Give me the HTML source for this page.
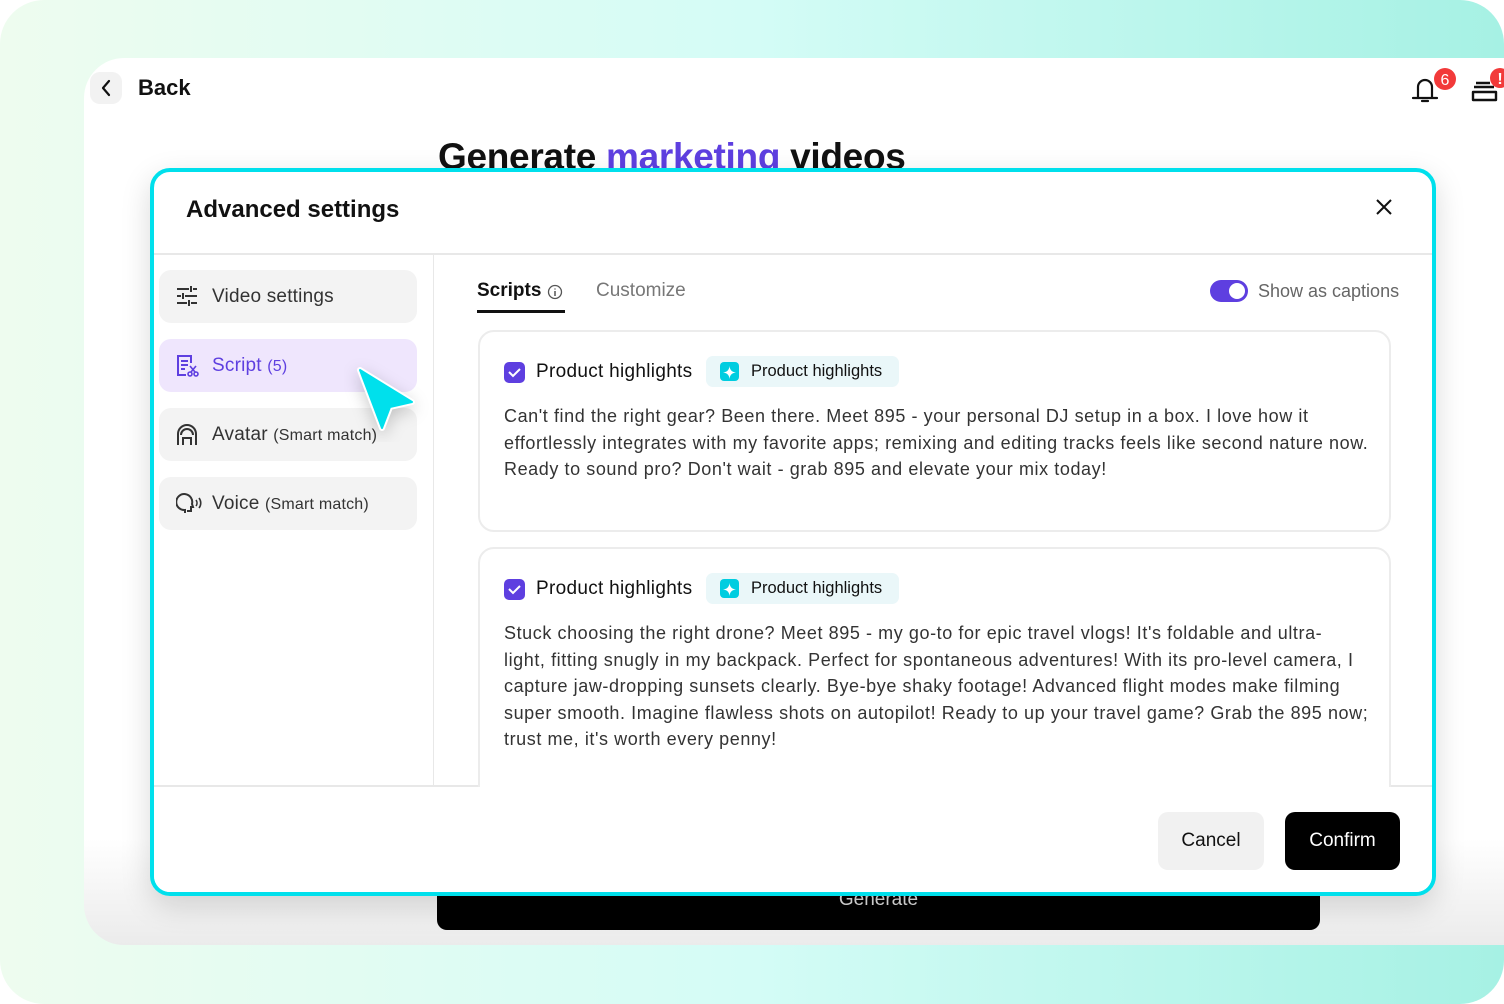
<!DOCTYPE html>
<html><head><meta charset="utf-8">
<style>
*{box-sizing:border-box;margin:0;padding:0}
body{width:1504px;height:1004px;overflow:hidden;font-family:"Liberation Sans",sans-serif;background:#fff;position:relative}
.bg{position:absolute;left:0;top:0;width:1504px;height:1004px;border-radius:44px;background:linear-gradient(90deg,#eefcef 0%,#d4fcf6 50%,#a6f1e4 100%)}
.panel{position:absolute;left:84px;top:58px;width:1420px;height:887px;border-radius:40px 0 0 40px;background:linear-gradient(180deg,#fff 0%,#fff 88%,#ebebeb 100%)}
.back{position:absolute;left:90px;top:72px;width:32px;height:32px;border-radius:10px;background:#f2f2f2}
.backt{position:absolute;left:138px;top:75px;font-size:22px;font-weight:bold;color:#111}
.title{position:absolute;left:438px;top:136px;font-size:37px;font-weight:bold;color:#111;letter-spacing:-0.3px;white-space:nowrap}
.title span{color:#5e3fe0}
.gen{position:absolute;left:437px;top:880px;width:883px;height:50px;border-radius:0 0 10px 10px;background:#000;color:#ddd;font-size:19px;text-align:center;line-height:40px}
.modal{position:absolute;left:150px;top:168px;width:1286px;height:728px;border:4px solid #00e0ec;border-radius:20px;background:#fff;box-shadow:0 10px 30px rgba(0,0,0,.15);overflow:hidden}
.mh{position:absolute;left:32px;top:24px;font-size:24px;font-weight:bold;color:#111}
.hd{position:absolute;left:0;top:81px;width:100%;height:2px;background:#e8e8e8}
.sd{position:absolute;left:279px;top:83px;width:1px;height:530px;background:#e8e8e8}
.fd{position:absolute;left:0;top:613px;width:100%;height:2px;background:#e8e8e8}
.item{position:absolute;left:5px;width:258px;height:53px;border-radius:12px;background:#f3f3f3;font-size:19px;color:#333;line-height:53px;padding-left:53px;letter-spacing:0.2px}
.item small{font-size:16px}
.item svg{position:absolute;left:17px;top:15px}
.item.act{background:#efe6fd;color:#5e3fe0}
.tab{position:absolute;top:108px;font-size:19px}
.card{position:absolute;left:324px;width:913px;border:2px solid #ececec;border-radius:16px;background:#fff}
.cb{position:absolute;left:24px;width:21px;height:21px;border-radius:5px;background:#5e3fe0}
.cb svg{position:absolute;left:4px;top:5px}
.ch{position:absolute;left:56px;font-size:19px;color:#111;letter-spacing:0.3px}
.tag{position:absolute;left:226px;width:193px;height:31px;border-radius:7px;background:#eaf7f9;font-size:16.5px;color:#111;line-height:31px;padding-left:45px}
.tag i{position:absolute;left:14px;top:6px;width:19px;height:19px;border-radius:4px;background:#00cde0}
.tx{position:absolute;left:24px;font-size:18px;line-height:26.6px;color:#333;letter-spacing:0.58px;white-space:nowrap}
.btn{position:absolute;top:640px;height:58px;border-radius:10px;font-size:19px;line-height:58px;text-align:center}
</style></head><body>
<div class="bg"></div>
<div class="panel"></div>
<div class="back"><svg width="32" height="32"><path d="M19 9l-6 7 6 7" fill="none" stroke="#111" stroke-width="2.2" stroke-linecap="round" stroke-linejoin="round"/></svg></div>
<div class="backt">Back</div>
<svg style="position:absolute;left:1408px;top:66px" width="52" height="38">
<path d="M5 32h24M10 31V21a7 7 0 0 1 14 0v10M14 35h6" fill="none" stroke="#111" stroke-width="2.2" stroke-linecap="round"/>
<circle cx="37" cy="13" r="11" fill="#f23a3a"/><text x="37" y="19" font-size="16" fill="#fff" text-anchor="middle" font-family="Liberation Sans">6</text></svg>
<svg style="position:absolute;left:1468px;top:66px" width="36" height="38">
<path d="M6 21h20M5 26h23v8H5zM8 17h14" fill="none" stroke="#111" stroke-width="2.4" stroke-linejoin="round"/>
<circle cx="32" cy="12" r="10" fill="#f23a3a"/><text x="32" y="18" font-size="16" font-weight="bold" fill="#fff" text-anchor="middle" font-family="Liberation Sans">!</text></svg>
<div class="title">Generate <span>marketing</span> videos</div>
<div class="gen">Generate</div>
<div class="modal">
<div class="mh">Advanced settings</div>
<svg style="position:absolute;left:1220px;top:25px" width="20" height="20"><path d="M3 3l14 14M17 3L3 17" stroke="#111" stroke-width="2"/></svg>
<div class="hd"></div><div class="sd"></div><div class="fd"></div>
<div class="item" style="top:98px"><svg width="22" height="22"><path d="M1 4h12M17 4h4M15 1v6M1 11h4M9 11h12M7 8v6M1 18h10M15 18h6M13 15v6" stroke="#333" stroke-width="2" fill="none"/></svg>Video settings</div>
<div class="item act" style="top:167px"><svg width="24" height="24"><path d="M15 9V2H2v19h8M5 7h7M5 11h7M5 15h4" stroke="#5e3fe0" stroke-width="2" fill="none"/><circle cx="14" cy="20" r="2" stroke="#5e3fe0" stroke-width="1.6" fill="none"/><circle cx="20" cy="20" r="2" stroke="#5e3fe0" stroke-width="1.6" fill="none"/><path d="M14 12l5 6M20 12l-5 6" stroke="#5e3fe0" stroke-width="1.6"/></svg>Script <small>(5)</small></div>
<div class="item" style="top:236px"><svg width="24" height="24"><path d="M2 22V11a9 9 0 0 1 18 0v11M7 22v-7h8v7" stroke="#333" stroke-width="2" fill="none"/><path d="M5 12a6 6 0 0 1 12 0" stroke="#333" stroke-width="2" fill="none"/></svg>Avatar <small>(Smart match)</small></div>
<div class="item" style="top:305px"><svg width="26" height="24"><path d="M9 21v-3a8 8 0 1 1 7-6l1 3h-2v4h-4" stroke="#333" stroke-width="2" fill="none"/><path d="M20 8a5 5 0 0 1 0 6M23 6a8 8 0 0 1 0 10" stroke="#333" stroke-width="1.6" fill="none"/></svg>Voice <small>(Smart match)</small></div>
<svg style="position:absolute;left:190px;top:180px" width="90" height="90"><path d="M16 18L68 50L46 55L38 76z" fill="#00e0ec" stroke="#fff" stroke-width="6" stroke-linejoin="round" style="filter:drop-shadow(0 5px 8px rgba(0,0,0,.2))"/><path d="M16 18L68 50L46 55L38 76z" fill="#00e0ec" stroke="#00e0ec" stroke-width="2" stroke-linejoin="round"/></svg>
<div class="tab" style="left:323px;color:#111;font-weight:bold">Scripts</div>
<svg style="position:absolute;left:393px;top:112px" width="16" height="16"><circle cx="8" cy="8" r="6.5" stroke="#555" stroke-width="1.3" fill="none"/><path d="M8 7v5M8 4.5v1" stroke="#555" stroke-width="1.5"/></svg>
<div style="position:absolute;left:323px;top:138px;width:88px;height:3px;background:#111"></div>
<div class="tab" style="left:442px;color:#777">Customize</div>
<div style="position:absolute;left:1056px;top:108px;width:38px;height:22px;border-radius:11px;background:#5e3fe0"><div style="position:absolute;left:19px;top:3px;width:16px;height:16px;border-radius:50%;background:#fff"></div></div>
<div class="tab" style="left:1104px;color:#666;font-size:18px;top:109px">Show as captions</div>
<div class="card" style="top:158px;height:202px">
<div class="cb" style="top:30px"><svg width="13" height="11"><path d="M1 5l4 4 7-7" stroke="#fff" stroke-width="2" fill="none"/></svg></div>
<div class="ch" style="top:29px">Product highlights</div>
<div class="tag" style="top:24px"><i><svg width="19" height="19"><path d="M9.5 3Q10 9 16 9.5Q10 10 9.5 16Q9 10 3 9.5Q9 9 9.5 3z" fill="#fff"/></svg></i>Product highlights</div>
<div class="tx" style="top:71px">Can't find the right gear? Been there. Meet 895 - your personal DJ setup in a box. I love how it<br>effortlessly integrates with my favorite apps; remixing and editing tracks feels like second nature now.<br>Ready to sound pro? Don't wait - grab 895 and elevate your mix today!</div>
</div>
<div class="card" style="top:375px;height:300px">
<div class="cb" style="top:30px"><svg width="13" height="11"><path d="M1 5l4 4 7-7" stroke="#fff" stroke-width="2" fill="none"/></svg></div>
<div class="ch" style="top:29px">Product highlights</div>
<div class="tag" style="top:24px"><i><svg width="19" height="19"><path d="M9.5 3Q10 9 16 9.5Q10 10 9.5 16Q9 10 3 9.5Q9 9 9.5 3z" fill="#fff"/></svg></i>Product highlights</div>
<div class="tx" style="top:71px">Stuck choosing the right drone? Meet 895 - my go-to for epic travel vlogs! It's foldable and ultra-<br>light, fitting snugly in my backpack. Perfect for spontaneous adventures! With its pro-level camera, I<br>capture jaw-dropping sunsets clearly. Bye-bye shaky footage! Advanced flight modes make filming<br>super smooth. Imagine flawless shots on autopilot! Ready to up your travel game? Grab the 895 now;<br>trust me, it's worth every penny!</div>
</div>
<div style="position:absolute;left:0;top:615px;width:100%;height:113px;background:#fff"></div>
<div class="btn" style="left:1004px;width:106px;background:#f1f1f1;color:#111">Cancel</div>
<div class="btn" style="left:1131px;width:115px;background:#000;color:#fff">Confirm</div>
</div>
</body></html>
